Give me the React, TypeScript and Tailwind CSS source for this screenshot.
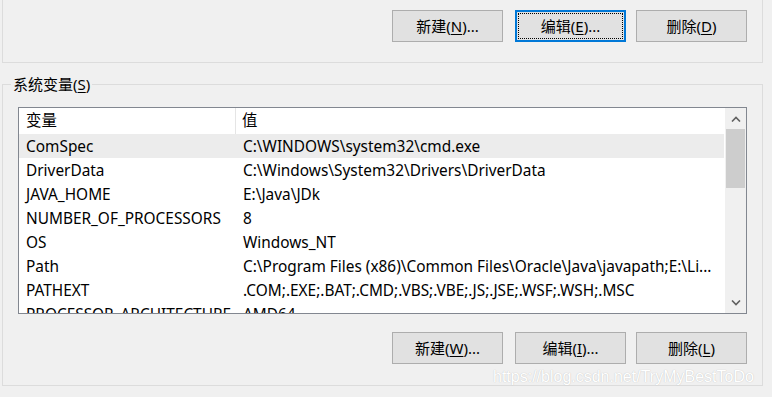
import React from 'react';

type Row = { name: string; value: string };

const rows: Row[] = [
  { name: 'ComSpec', value: 'C:\\WINDOWS\\system32\\cmd.exe' },
  { name: 'DriverData', value: 'C:\\Windows\\System32\\Drivers\\DriverData' },
  { name: 'JAVA_HOME', value: 'E:\\Java\\JDk' },
  { name: 'NUMBER_OF_PROCESSORS', value: '8' },
  { name: 'OS', value: 'Windows_NT' },
  { name: 'Path', value: 'C:\\Program Files (x86)\\Common Files\\Oracle\\Java\\javapath;E:\\Li...' },
  { name: 'PATHEXT', value: '.COM;.EXE;.BAT;.CMD;.VBS;.VBE;.JS;.JSE;.WSF;.WSH;.MSC' },
  { name: 'PROCESSOR_ARCHITECTURE', value: 'AMD64' },
];

// win32 style push button, key letter underlined
function WinButton({ label, hotkey, dots = true, focused, className = '' }: { label: string; hotkey: string; dots?: boolean; focused?: boolean; className?: string }) {
  return (
    <button
      className={
        'w-[111px] h-[32px] bg-[#e1e1e1] flex items-center justify-center text-[15px] text-black ' +
        (focused ? 'border-2 border-[#0078d7] p-[1px] ' : 'border border-[#adadad] ') +
        className
      }
    >
      <span
        className={
          'w-full h-full flex items-center justify-center ' +
          (focused ? 'outline-1 outline-dotted outline-black -outline-offset-1' : '')
        }
      >
        {label}(<span className="underline underline-offset-2">{hotkey}</span>){dots ? '...' : ''}
      </span>
    </button>
  );
}

function Chevron({ up }: { up?: boolean }) {
  return (
    <svg width="10" height="6" viewBox="0 0 10 6" className="block">
      <path d={up ? 'M1 5.5 L5 1.5 L9 5.5' : 'M1 0.5 L5 4.5 L9 0.5'} fill="none" stroke="#606060" strokeWidth="1.6" />
    </svg>
  );
}

export default function App() {
  return (
    <div
      className="w-[772px] h-[397px] bg-[#f0f0f0] overflow-hidden relative text-black"
      style={{ fontFamily: '"Noto Sans", "Noto Sans CJK SC", sans-serif' }}
    >
      {/* user variables group (bottom part only) */}
      <div className="ml-[2px] w-[761px] h-[63px] border-x border-b border-[#dcdcdc] flex justify-end items-start pt-[10px] pr-[15px]">
        <WinButton label="新建" hotkey="N" />
        <WinButton label="编辑" hotkey="E" focused className="ml-[12px]" />
        <WinButton label="删除" hotkey="D" dots={false} className="ml-[10px]" />
      </div>

      {/* system variables group */}
      <div className="relative mt-[21px] ml-[2px] w-[761px] h-[302px] border border-[#dcdcdc] pt-[22px] pl-[15px]">
        <span className="absolute left-[8px] top-[-11px] px-[2px] bg-[#f0f0f0] text-[15px] leading-[20px]">
          系统变量(<span className="underline underline-offset-2">S</span>)
        </span>

        <div className="w-[729px] h-[207px] border border-[#828790] bg-white flex overflow-hidden">
          <div className="flex-1 flex flex-col overflow-hidden text-[15.4px]">
            <div className="h-[26px] flex shrink-0 items-center">
              <div className="w-[217px] h-full pl-[7px] flex items-center border-r border-[#e5e5e5]">变量</div>
              <div className="pl-[6px]">值</div>
            </div>
            {rows.map((r, i) => (
              <div key={r.name} className={'h-[24px] flex shrink-0 items-center pt-[1px] ' + (i === 0 ? 'bg-[#ececec]' : '')}>
                <div className="w-[217px] pl-[7px] whitespace-nowrap overflow-hidden">{r.name}</div>
                <div className="pl-[7px] whitespace-nowrap overflow-hidden">{r.value}</div>
              </div>
            ))}
          </div>

          {/* vertical scrollbar */}
          <div className="w-[22px] h-full bg-[#f0f0f0] border-l border-white flex flex-col">
            <div className="h-[21px] flex items-center justify-center">
              <Chevron up />
            </div>
            <div className="mx-[1px] h-[59px] bg-[#cdcdcd]" />
            <div className="flex-1" />
            <div className="h-[21px] flex items-center justify-center">
              <Chevron />
            </div>
          </div>
        </div>

        <div className="w-[729px] flex justify-end mt-[18px]">
          <WinButton label="新建" hotkey="W" />
          <WinButton label="编辑" hotkey="I" className="ml-[12px]" />
          <WinButton label="删除" hotkey="L" dots={false} className="ml-[10px]" />
        </div>
      </div>

      {/* csdn watermark */}
      <span
        className="absolute left-[493px] top-[367px] text-[16px] leading-[20px] text-white [text-shadow:0_0_1px_#b5b5b5]"
        style={{ fontFamily: '"Liberation Sans", Arial, sans-serif' }}
      >
        https://blog.csdn.net/TryMyBestToDo
      </span>
    </div>
  );
}
